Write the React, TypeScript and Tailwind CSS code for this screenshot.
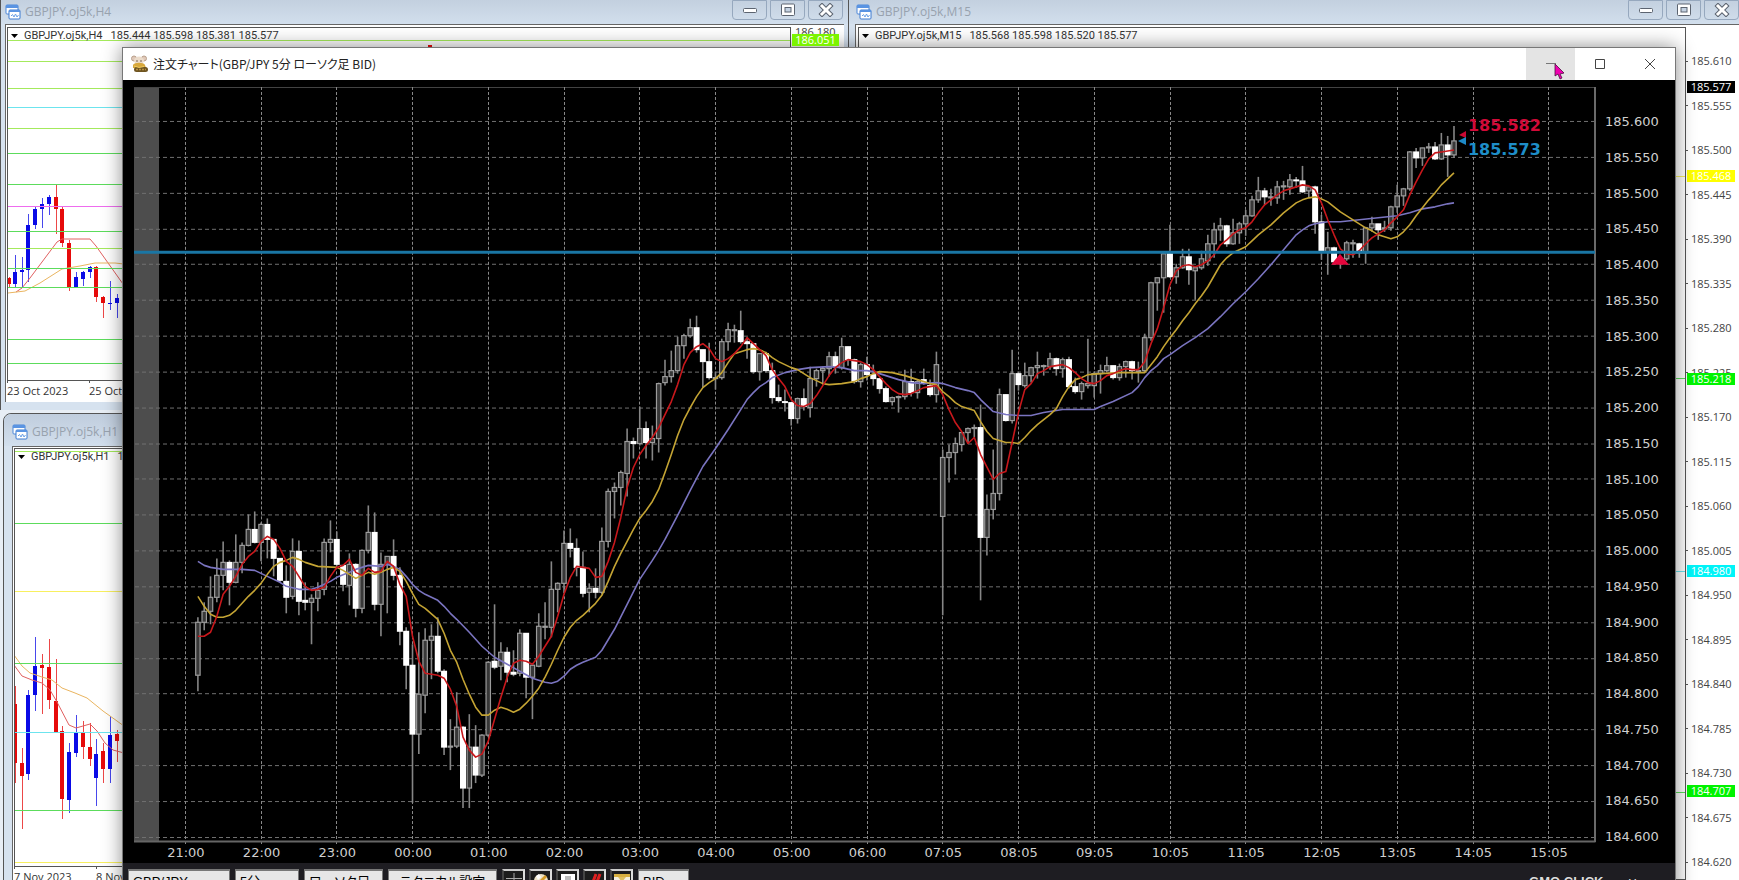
import React from "react";

type Candle = [high: number, top: number, bottom: number, low: number, up: 0 | 1];
type Point = [number, number];

// 5 minute candles, oldest first
const CANDLES: Candle[] = [
  [618, 623, 676, 691, 1], [603, 612, 623, 630, 1], [577, 598, 612, 624, 1], [559, 576, 598, 602, 1],
  [542, 563, 576, 590, 1], [561, 563, 583, 605, 0], [535, 563, 583, 583, 1], [543, 546, 563, 573, 1],
  [515, 530, 546, 546, 1], [512, 530, 543, 543, 0], [523, 525, 543, 561, 1], [519, 525, 540, 558, 0],
  [540, 540, 559, 576, 0], [559, 559, 581, 582, 0], [566, 582, 598, 613, 0], [539, 552, 597, 599, 1],
  [541, 552, 602, 615, 0], [583, 601, 603, 610, 0], [595, 599, 603, 644, 1], [583, 591, 599, 611, 1],
  [539, 543, 590, 595, 1], [521, 540, 543, 552, 1], [532, 540, 565, 566, 0], [566, 566, 585, 591, 0],
  [554, 565, 586, 605, 1], [564, 565, 609, 617, 0], [550, 551, 609, 613, 1], [506, 533, 551, 553, 1],
  [513, 533, 605, 610, 0], [553, 565, 605, 636, 1], [557, 557, 565, 613, 1], [540, 557, 576, 580, 0],
  [568, 576, 632, 645, 0], [628, 632, 666, 689, 0], [645, 666, 735, 803, 0], [633, 695, 735, 754, 1],
  [629, 641, 696, 713, 1], [625, 637, 641, 679, 1], [618, 637, 672, 673, 0], [670, 672, 748, 755, 0],
  [720, 747, 748, 770, 1], [693, 728, 747, 748, 1], [727, 728, 789, 808, 0], [715, 748, 789, 808, 1],
  [726, 748, 776, 783, 0], [735, 736, 776, 777, 1], [662, 663, 736, 737, 1], [605, 662, 668, 669, 0],
  [643, 653, 667, 680, 1], [648, 653, 673, 682, 0], [651, 673, 675, 676, 0], [630, 634, 674, 676, 1],
  [634, 634, 678, 698, 0], [664, 666, 678, 719, 1], [614, 627, 667, 667, 1], [603, 627, 628, 639, 1],
  [562, 590, 628, 637, 1], [583, 584, 590, 612, 1], [531, 544, 584, 593, 1], [529, 544, 549, 557, 0],
  [539, 549, 568, 576, 0], [552, 568, 594, 597, 0], [584, 589, 593, 612, 1], [569, 589, 593, 598, 0],
  [528, 542, 593, 594, 1], [489, 492, 542, 547, 1], [483, 488, 492, 518, 1], [471, 473, 488, 505, 1],
  [429, 442, 474, 496, 1], [438, 442, 444, 458, 0], [407, 429, 444, 445, 1], [422, 429, 443, 458, 0],
  [426, 439, 443, 460, 1], [383, 384, 439, 452, 1], [360, 377, 383, 385, 1], [351, 371, 377, 382, 1],
  [337, 346, 371, 373, 1], [334, 336, 346, 358, 1], [319, 328, 336, 337, 1], [316, 328, 350, 352, 0],
  [350, 350, 362, 387, 0], [343, 362, 378, 379, 0], [372, 378, 379, 389, 1], [339, 342, 378, 379, 1],
  [323, 330, 342, 350, 1], [325, 330, 331, 342, 1], [311, 331, 342, 343, 0], [338, 342, 344, 358, 0],
  [344, 344, 372, 373, 0], [354, 354, 372, 380, 1], [352, 354, 371, 372, 0], [363, 371, 398, 403, 0],
  [385, 398, 401, 402, 0], [390, 402, 403, 411, 0], [403, 403, 419, 425, 0], [398, 399, 419, 423, 1],
  [389, 399, 407, 410, 0], [367, 379, 408, 417, 1], [369, 371, 379, 386, 1], [367, 369, 371, 384, 1],
  [352, 357, 369, 376, 1], [352, 357, 367, 373, 0], [338, 347, 368, 369, 1], [347, 347, 360, 365, 0],
  [359, 360, 382, 383, 0], [363, 365, 382, 387, 1], [357, 365, 375, 380, 0], [365, 375, 379, 385, 0],
  [379, 379, 389, 393, 0], [387, 389, 402, 402, 0], [397, 398, 402, 405, 1], [396, 397, 397, 412, 1],
  [370, 382, 397, 399, 1], [369, 382, 393, 396, 0], [380, 382, 393, 398, 1], [369, 380, 383, 384, 0],
  [380, 386, 395, 396, 0], [352, 365, 395, 402, 1], [450, 458, 517, 615, 1], [445, 453, 458, 482, 1],
  [438, 444, 453, 474, 1], [433, 433, 445, 451, 1], [428, 429, 433, 443, 1], [425, 428, 429, 437, 1],
  [405, 428, 538, 600, 0], [495, 510, 538, 555, 1], [450, 494, 510, 519, 1], [389, 395, 494, 500, 1],
  [395, 395, 421, 421, 0], [350, 374, 421, 423, 1], [373, 374, 385, 390, 0], [363, 376, 386, 387, 1],
  [367, 368, 376, 382, 1], [352, 366, 368, 378, 1], [365, 366, 367, 375, 1], [353, 359, 367, 369, 1],
  [358, 359, 369, 375, 0], [358, 360, 369, 377, 1], [357, 360, 387, 388, 0], [378, 387, 392, 393, 0],
  [382, 384, 392, 399, 1], [339, 384, 386, 388, 1], [372, 374, 386, 397, 1], [365, 371, 374, 393, 1],
  [357, 366, 371, 372, 1], [366, 366, 378, 379, 0], [364, 367, 378, 380, 1], [361, 362, 367, 377, 1],
  [361, 362, 371, 379, 0], [362, 371, 372, 382, 1], [334, 338, 371, 372, 1], [282, 283, 338, 340, 1],
  [278, 278, 283, 310, 1], [254, 254, 278, 312, 1], [225, 254, 277, 277, 0], [264, 268, 277, 283, 1],
  [249, 257, 268, 268, 1], [249, 257, 270, 284, 0], [267, 268, 271, 299, 1], [251, 259, 268, 269, 1],
  [235, 244, 261, 265, 1], [223, 230, 244, 257, 1], [218, 226, 230, 240, 1], [225, 226, 244, 246, 0],
  [219, 233, 244, 244, 1], [222, 224, 233, 243, 1], [210, 216, 224, 235, 1], [196, 200, 216, 216, 1],
  [177, 191, 200, 202, 1], [188, 191, 197, 204, 0], [189, 197, 198, 205, 1], [181, 187, 198, 203, 1],
  [181, 186, 187, 199, 1], [174, 180, 187, 194, 1], [177, 180, 181, 187, 0], [166, 181, 192, 192, 0],
  [186, 187, 191, 197, 1], [186, 187, 222, 233, 0], [215, 222, 252, 259, 0], [232, 248, 252, 274, 1],
  [247, 248, 262, 264, 0], [257, 259, 262, 268, 1], [241, 243, 259, 260, 1], [240, 243, 244, 257, 1],
  [243, 244, 253, 257, 0], [227, 228, 253, 263, 1], [217, 224, 228, 231, 1], [224, 224, 230, 239, 0],
  [221, 228, 229, 231, 1], [206, 207, 228, 230, 1], [185, 196, 207, 212, 1], [188, 189, 196, 205, 1],
  [151, 152, 189, 190, 1], [148, 152, 158, 167, 0], [148, 148, 158, 165, 1], [143, 147, 148, 152, 1],
  [142, 147, 159, 159, 0], [133, 145, 159, 159, 1], [136, 145, 155, 176, 0], [126, 141, 155, 157, 1],
];

// moving averages as [candle index, y]
const MA_SHORT: Point[] = [
  [0, 637], [1, 637], [2, 633], [3, 617], [4, 595], [5, 587], [6, 577], [7, 565], [8, 557], [9, 552],
  [10, 542], [11, 537], [12, 540], [13, 549], [14, 562], [15, 567], [16, 577], [17, 587], [18, 591],
  [19, 590], [20, 588], [21, 577], [22, 568], [23, 566], [24, 560], [25, 573], [26, 576], [27, 569],
  [28, 573], [29, 572], [30, 562], [31, 567], [32, 585], [33, 597], [34, 637], [35, 662], [36, 674],
  [38, 676], [39, 679], [40, 690], [41, 707], [42, 738], [43, 751], [44, 758], [45, 755], [46, 742],
  [47, 720], [48, 698], [49, 678], [50, 664], [51, 661], [52, 662], [53, 665], [54, 657], [55, 647],
  [56, 637], [57, 617], [58, 595], [59, 578], [60, 567], [61, 568], [62, 569], [63, 578], [64, 577],
  [65, 562], [66, 543], [67, 518], [68, 488], [69, 468], [70, 455], [71, 446], [72, 438], [73, 428],
  [74, 415], [75, 402], [76, 385], [77, 365], [78, 353], [79, 347], [80, 344], [81, 349], [82, 359],
  [83, 362], [84, 359], [85, 354], [86, 347], [87, 338], [88, 344], [89, 350], [90, 356], [91, 370],
  [92, 379], [93, 387], [94, 400], [95, 406], [96, 407], [97, 404], [98, 396], [99, 386], [100, 376],
  [101, 368], [102, 363], [103, 360], [104, 361], [105, 362], [106, 365], [107, 370], [108, 377],
  [109, 384], [110, 390], [111, 394], [112, 395], [113, 394], [114, 391], [115, 388], [116, 387],
  [117, 386], [118, 395], [119, 410], [120, 423], [121, 432], [122, 444], [123, 438], [124, 455],
  [126, 480], [127, 474], [128, 472], [129, 443], [130, 413], [131, 390], [132, 384], [133, 374],
  [134, 371], [135, 367], [136, 366], [137, 365], [138, 368], [139, 373], [140, 379], [141, 383],
  [142, 384], [143, 381], [144, 376], [145, 374], [146, 371], [147, 369], [148, 370], [149, 370],
  [150, 362], [151, 344], [152, 329], [153, 308], [154, 285], [155, 271], [156, 266], [157, 265],
  [158, 267], [159, 265], [160, 261], [161, 255], [162, 245], [163, 240], [164, 234], [165, 230],
  [166, 228], [167, 222], [168, 213], [169, 205], [170, 200], [171, 195], [172, 191], [173, 189],
  [174, 187], [175, 185], [176, 186], [177, 190], [178, 203], [179, 220], [180, 235], [181, 249],
  [182, 254], [183, 255], [184, 251], [185, 244], [186, 238], [187, 234], [188, 230], [189, 223],
  [190, 217], [191, 210], [192, 195], [193, 182], [194, 170], [195, 159], [196, 153], [197, 152],
  [198, 151], [199, 150],
];

const MA_MIDDLE: Point[] = [
  [0, 597], [1, 607], [2, 615], [3, 618], [4, 618], [5, 616], [6, 611], [7, 604], [8, 597], [9, 591],
  [10, 584], [11, 575], [12, 567], [13, 563], [14, 561], [15, 558], [16, 560], [17, 563], [19, 567],
  [22, 568], [23, 571], [24, 575], [25, 579], [26, 576], [27, 573], [28, 575], [29, 573], [30, 570],
  [31, 568], [32, 572], [33, 582], [34, 594], [35, 605], [36, 609], [38, 620], [39, 634], [40, 651],
  [41, 663], [42, 680], [43, 695], [44, 708], [45, 716], [46, 716], [47, 711], [48, 708], [49, 710],
  [50, 713], [51, 710], [52, 704], [53, 697], [54, 689], [55, 678], [56, 665], [57, 651], [58, 638],
  [59, 628], [60, 621], [61, 616], [62, 610], [63, 604], [64, 596], [65, 582], [66, 567], [67, 554],
  [68, 542], [69, 530], [70, 519], [71, 511], [72, 502], [73, 490], [74, 473], [75, 455], [76, 436],
  [77, 420], [78, 408], [79, 397], [80, 388], [81, 383], [82, 379], [83, 373], [84, 363], [85, 354],
  [86, 352], [87, 350], [88, 349], [89, 350], [90, 353], [91, 358], [92, 362], [94, 368], [95, 370],
  [96, 374], [97, 378], [98, 381], [99, 384], [100, 385], [102, 384], [104, 382], [105, 379],
  [106, 377], [107, 374], [108, 372], [110, 373], [112, 376], [114, 380], [116, 384], [117, 385],
  [118, 392], [119, 397], [120, 403], [121, 407], [122, 409], [123, 411], [124, 422], [125, 432],
  [126, 439], [127, 441], [128, 443], [129, 443], [130, 444], [131, 438], [132, 431], [133, 425],
  [134, 420], [135, 415], [136, 409], [137, 397], [138, 387], [139, 380], [140, 378], [141, 375],
  [143, 374], [146, 373], [148, 373], [150, 373], [151, 365], [152, 357], [153, 347], [154, 338],
  [155, 330], [156, 321], [157, 313], [158, 304], [159, 296], [160, 287], [161, 276], [162, 265],
  [163, 258], [164, 253], [165, 250], [166, 247], [167, 241], [168, 235], [169, 230], [170, 225],
  [171, 219], [172, 213], [173, 208], [174, 203], [175, 200], [176, 198], [177, 197], [178, 199],
  [179, 202], [180, 207], [181, 212], [182, 216], [183, 220], [184, 224], [185, 228], [186, 231],
  [187, 235], [188, 237], [189, 239], [190, 237], [191, 232], [192, 225], [193, 216], [194, 208],
  [195, 200], [196, 193], [197, 185], [198, 179], [199, 173],
];

const MA_LONG: Point[] = [
  [0, 562], [1, 566], [2, 568], [4, 570], [7, 570], [9, 571], [11, 577], [13, 583], [14, 587],
  [16, 590], [18, 590], [19, 588], [21, 582], [22, 578], [24, 573], [25, 570], [27, 566], [29, 567],
  [30, 565], [31, 567], [32, 570], [33, 577], [34, 585], [35, 591], [36, 595], [38, 601], [39, 607],
  [40, 614], [41, 620], [43, 633], [45, 647], [47, 658], [49, 665], [51, 672], [53, 679], [54, 681],
  [55, 683], [56, 684], [57, 682], [58, 677], [59, 670], [60, 666], [61, 663], [63, 658], [64, 651],
  [66, 630], [68, 605], [70, 580], [72, 561], [73, 551], [74, 540], [76, 516], [78, 491], [80, 467],
  [82, 449], [84, 430], [86, 410], [87, 400], [88, 393], [89, 387], [90, 383], [91, 378], [93, 373],
  [95, 370], [97, 368], [100, 367], [102, 368], [104, 371], [106, 371], [107, 372], [109, 376],
  [111, 380], [113, 383], [115, 384], [117, 383], [118, 384], [120, 388], [122, 391], [123, 393],
  [124, 400], [126, 412], [128, 415], [130, 416], [132, 416], [134, 413], [136, 411], [137, 410],
  [142, 410], [143, 407], [145, 402], [148, 393], [149, 387], [150, 378], [151, 371], [152, 366],
  [153, 359], [154, 355], [156, 346], [158, 338], [160, 329], [162, 317], [164, 304], [166, 292],
  [168, 279], [170, 265], [172, 250], [174, 235], [175, 230], [176, 226], [177, 224], [179, 222],
  [181, 222], [184, 220], [187, 218], [190, 216], [192, 213], [194, 209], [196, 207], [198, 204],
  [199, 203],
];

const PRICES = Array.from({ length: 21 }, (_, i) => (185.6 - i * 0.05).toFixed(3));
const TIMES = [
  "21:00", "22:00", "23:00", "00:00", "01:00", "02:00", "03:00", "04:00", "05:00", "06:00",
  "07:05", "08:05", "09:05", "10:05", "11:05", "12:05", "13:05", "14:05", "15:05",
];
const M15_PRICES = Array.from({ length: 19 }, (_, i) => (185.61 - i * 0.055).toFixed(3));

const LIME = "#a4ea5c";
const GREEN = "#5cdc5c";
const YELLOW = "#f8f060";
const CYAN = "#6ce4ee";
const MAGENTA = "#ee6cee";

const candleX = (i: number) => 197.9 + i * 6.312;
const toPoints = (line: Point[]) => line.map(([i, y]) => `${candleX(i)},${y}`).join(" ");

function OrderPlot() {
  return (
    <svg
      className="block h-full w-full"
      viewBox="134 87 1464 759"
      preserveAspectRatio="none"
      role="img"
      aria-label="GBP/JPY 5分"
    >
      <rect x="134" y="87" width="25" height="756" fill="#4d4d4d" />
      <path d="M134 87.5H1595" stroke="#444" />
      <g stroke="#707070" strokeWidth="1">
        {PRICES.map((p, i) => (
          <path key={p} d={`M135 ${Math.round(121 + i * 35.84) + 0.5}H1598`} strokeDasharray="4 3" />
        ))}
        {TIMES.map((t, i) => (
          <path
            key={t}
            d={`M${Math.round(185 + i * 75.74) + 0.5} 87V845`}
            stroke="#8a8a8a"
            strokeDasharray="3 2"
          />
        ))}
      </g>
      <path d="M134 842.5H1595.5" stroke="#666" strokeWidth="2" fill="none" />
      <path d="M1595 87V843" stroke="#6a6a6a" strokeWidth="2" />
      {CANDLES.map(([high, top, bottom, low, up], i) => {
        const x = candleX(i);
        return (
          <g key={i}>
            <path d={`M${x} ${high}V${low + 1}`} stroke="#868686" strokeWidth="1.6" />
            {up ? (
              <rect
                x={x - 2.2}
                y={top}
                width="4.4"
                height={Math.max(bottom - top, 1)}
                fill="#383838"
                stroke="#9c9c9c"
                strokeWidth="1.2"
              />
            ) : (
              <rect x={x - 3} y={top - 0.5} width="6" height={Math.max(bottom - top + 1, 2)} fill="#fff" />
            )}
          </g>
        );
      })}
      <g fill="none" strokeWidth="1.6" strokeLinejoin="round">
        <polyline points={toPoints(MA_LONG)} stroke="#7a74c0" />
        <polyline points={toPoints(MA_MIDDLE)} stroke="#c4a434" />
        <polyline points={toPoints(MA_SHORT)} stroke="#c8181c" />
      </g>
      <path d="M134 252.5H1595" stroke="#1a76a4" strokeWidth="3" />
      <path d="M1340 254L1349 265H1331Z" fill="#e4063c" />
      <path d="M1459 135L1466 131V138Z" fill="#c80a34" />
      <path d="M1458 141L1466 137V145Z" fill="#1e8ac8" />
      <g fontFamily="DejaVu Sans, sans-serif" fontSize="16" fontWeight="700">
        <text x="1468" y="131" fill="#d20a38">185.582</text>
        <text x="1468" y="155" fill="#1e8ec8">185.573</text>
      </g>
    </svg>
  );
}

// x position, high, top, bottom, low, rising
type MiniCandle = [number, number, number, number, number, 0 | 1];

const H4_CANDLES: MiniCandle[] = [
  [9, 277, 278, 284, 288, 0], [15, 255, 272, 284, 288, 1], [22, 257, 270, 272, 288, 1],
  [28, 214, 225, 270, 282, 1], [35, 206, 209, 225, 229, 1], [42, 198, 204, 209, 228, 1],
  [49, 195, 197, 204, 215, 1], [56, 185, 197, 209, 234, 0], [62, 207, 209, 243, 247, 0],
  [69, 240, 243, 287, 291, 0], [76, 272, 277, 287, 287, 1], [83, 271, 272, 279, 286, 1],
  [90, 266, 267, 272, 278, 1], [96, 266, 267, 297, 302, 0], [103, 296, 297, 303, 318, 0],
  [110, 281, 303, 304, 310, 1], [117, 294, 298, 303, 318, 1], [124, 300, 302, 310, 319, 0],
];
const H1_CANDLES: MiniCandle[] = [
  [15, 686, 704, 763, 783, 0], [22, 748, 763, 776, 829, 0], [28, 690, 695, 774, 780, 1],
  [35, 637, 666, 695, 711, 1], [42, 654, 665, 668, 714, 0], [49, 639, 667, 700, 709, 0],
  [56, 659, 701, 732, 732, 0], [62, 726, 731, 799, 819, 0], [69, 743, 752, 800, 813, 1],
  [76, 715, 732, 753, 757, 1], [83, 721, 733, 747, 759, 0], [90, 723, 747, 759, 766, 0],
  [96, 739, 754, 778, 806, 1], [103, 743, 751, 769, 783, 0], [110, 716, 735, 769, 783, 1],
  [117, 730, 734, 741, 762, 0],
];

interface MiniPlotProps {
  origin: Point;
  levels: [number, string][];
  candles?: MiniCandle[];
  fast?: string;
  slow?: string;
}

const MiniPlot: React.FC<MiniPlotProps> = ({ origin, levels, candles = [], fast, slow }) => (
  <svg className="absolute inset-0 h-full w-full" aria-hidden="true">
    <g transform={`translate(${-origin[0]} ${-origin[1]})`}>
      {candles.map(([x, high, top, bottom, low, up]) => (
        <g key={x} fill={up ? "#0a0ae6" : "#e60a0a"}>
          <rect x={x} y={high} width="1" height={low - high} opacity="0.75" />
          <rect x={x - 2} y={top} width="4" height={Math.max(bottom - top, 1)} />
        </g>
      ))}
      <polyline points={fast} fill="none" stroke="#e06060" />
      <polyline points={slow} fill="none" stroke="#eab560" />
      {levels.map(([y, color]) => (
        <rect key={y} x={origin[0]} y={y} width="100%" height="1" fill={color} />
      ))}
    </g>
  </svg>
);

const ChartIcon = () => (
  <svg width="16" height="16" viewBox="0 0 16 16" aria-hidden="true">
    <rect x="1" y="1" width="12" height="9" rx="1" fill="#fff" stroke="#4a86d8" />
    <path d="M1 1h12v3H1z" fill="#5a94e2" />
    <rect x="4" y="6" width="11" height="9" rx="1" fill="#fff" stroke="#3c7ad0" />
    <path d="M4 6h11v2H4z" fill="#5a94e2" />
    <path d="M6 12l1.500-1.500L9 13l1.500-3L12 13l1.500-2" fill="none" stroke="#6aa0e6" />
  </svg>
);

const frameButton = "flex h-5 w-[35px] items-center justify-center rounded-b-sm border border-[#96a8be]";

const FrameButtons = () => (
  <div className="flex h-5 gap-[3px] self-start">
    <button aria-label="Minimize" className={frameButton}>
      <svg width="16" height="14" viewBox="0 0 16 14">
        <rect x="1.500" y="5.500" width="13" height="4" rx="1" fill="#fff" stroke="#5c6470" />
      </svg>
    </button>
    <button aria-label="Maximize" className={frameButton}>
      <svg width="16" height="14" viewBox="0 0 16 14">
        <rect x="1.500" y="1" width="13" height="11.500" rx="1" fill="#fff" stroke="#5c6470" />
        <rect x="5" y="4.500" width="6" height="4.500" fill="#c4d2e2" stroke="#5c6470" />
      </svg>
    </button>
    <button aria-label="Close" className={frameButton}>
      <svg width="16" height="14" viewBox="0 0 16 14">
        <path d="M4 3l8 8M12 3L4 11" stroke="#5c6470" strokeWidth="5" strokeLinecap="square" />
        <path d="M4 3l8 8M12 3L4 11" stroke="#fff" strokeWidth="3" strokeLinecap="square" />
      </svg>
    </button>
  </div>
);

interface FrameTitleProps {
  title: string;
  className: string;
  buttons?: boolean;
}

const FrameTitle: React.FC<FrameTitleProps> = ({ title, className, buttons }) => (
  <div className={`flex shrink-0 items-center gap-1 text-xs text-[#98a2ae] ${className}`}>
    <ChartIcon />
    <h2 className="flex-1 whitespace-nowrap">{title}</h2>
    {buttons && <FrameButtons />}
  </div>
);

const SymbolLine = ({ symbol, values }: { symbol: string; values: string }) => (
  <p className="relative flex items-center whitespace-nowrap text-[#333] font-['Roboto',sans-serif]">
    <svg width="7" height="4" viewBox="0 0 7 4" className="mr-[6px]" aria-hidden="true">
      <path d="M0 0h7L3.500 4z" fill="#000" />
    </svg>
    <span className="mr-2">{symbol}</span>
    <span>{values}</span>
  </p>
);

const DateAxis = ({ dates }: { dates: string[] }) => (
  <div className="flex">
    {dates.map((date) => (
      <div key={date} className="w-[82px] whitespace-nowrap">
        <div className="h-[2px] w-px bg-[#555]" />
        {date}
      </div>
    ))}
  </div>
);

const H4Window = () => (
  <section className="absolute left-0 top-0 flex h-[410px] w-[848px] flex-col border-l border-[#555] bg-[#d6e2ef] px-1 pb-2">
    <FrameTitle title="GBPJPY.oj5k,H4" className="-mx-1 h-6 bg-linear-to-b from-[#c3d0df] to-[#d2dfed] pb-px pl-1 pr-[5px]" buttons />
    <div className="flex min-h-0 flex-1 border-l border-t border-[#666] bg-white pl-px pt-[2px]">
      <div className="flex flex-1 flex-col">
        <div className="relative h-[354px] border border-[#555] pl-[3px]">
          <MiniPlot
            origin={[8, 28]}
            levels={[
              [40, LIME], [61, LIME], [88, LIME], [107, CYAN], [128, LIME], [153, GREEN], [184, GREEN],
              [206, MAGENTA], [231, GREEN], [248, LIME], [268, GREEN], [287, GREEN], [339, GREEN], [363, GREEN],
            ]}
            candles={[...H4_CANDLES, [430, 45, 45, 47, 60, 0]]}
            fast="16,292 22,288 30,278 57,242 62,239 90,239 96,246 123,284"
            slow="8,293 25,291 40,283 62,269 80,266 95,263 115,263 124,264"
          />
          <SymbolLine symbol="GBPJPY.oj5k,H4" values="185.444 185.598 185.381 185.577" />
        </div>
        <DateAxis dates={["23 Oct 2023", "25 Oct 2023"]} />
      </div>
      <div className="flex w-[53px] flex-col items-start text-[#444]">
        <span className="h-[7px] pl-1 leading-[10px]">186.180</span>
        <span className="relative z-1 ml-px w-[47px] bg-[#7cf400] text-center leading-3 text-white">186.051</span>
      </div>
    </div>
  </section>
);

const H1Window = () => (
  <section className="absolute -bottom-8 left-[3px] top-[413px] flex w-[845px] flex-col rounded-t-lg border border-[#555] bg-[#d6e2ef] pl-2">
    <FrameTitle title="GBPJPY.oj5k,H1" className="-ml-2 h-8 rounded-t-lg bg-linear-to-b from-[#c0cddd] to-[#d2dfed] pl-2 pt-1" />
    <div className="flex min-h-0 flex-1 border-l border-t border-[#666] bg-white pl-px pt-px">
      <div className="flex flex-1 flex-col">
        <div className="relative h-[419px] border border-[#555] pl-[3px]">
          <MiniPlot
            origin={[15, 449]}
            levels={[[451, LIME], [523, GREEN], [591, YELLOW], [663, GREEN], [732, CYAN], [810, GREEN], [862, YELLOW]]}
            candles={H1_CANDLES}
            fast="14,665 22,676 32,680 42,683 50,690 57,702 69,725 76,728 90,724 97,731 105,743 113,750 124,753"
            slow="14,655 22,666 30,673 42,677 52,680 62,688 75,693 87,698 103,711 124,726"
          />
          <SymbolLine symbol="GBPJPY.oj5k,H1" values="185.568 185.598 185.520 185.577" />
        </div>
        <DateAxis dates={["7 Nov 2023", "8 Nov 2023"]} />
      </div>
    </div>
  </section>
);

const M15Window = () => (
  <section className="absolute bottom-0 left-[848px] right-0 top-0 flex flex-col border-l border-[#555] bg-[#d6e2ef] pl-[6px]">
    <FrameTitle title="GBPJPY.oj5k,M15" className="-ml-[6px] h-6 bg-linear-to-b from-[#c3d0df] to-[#d2dfed] pb-px pl-[7px]" buttons />
    <div className="flex min-h-0 flex-1 border-l border-t border-[#666] bg-white pl-[2px] pt-[2px]">
      <div className="relative flex-1 border border-[#555] pl-[3px]">
        <MiniPlot origin={[0, 28]} levels={[[176, YELLOW], [378, GREEN], [571, CYAN], [792, GREEN]]} />
        <SymbolLine symbol="GBPJPY.oj5k,M15" values="185.568 185.598 185.520 185.577" />
      </div>
      <div className="relative w-[53px] text-[#444]">
        <ol className="flex h-full flex-col justify-between pb-[10px] pt-[26px]">
          {M15_PRICES.map((price) => (
            <li key={price} className="flex items-center gap-[3px]">
              <span className="h-px w-[2px] bg-[#555]" />
              {price}
            </li>
          ))}
        </ol>
        <span className="absolute left-px top-[54px] w-12 bg-black text-center leading-3 text-white">185.577</span>
        <span className="absolute left-px top-[143px] w-12 bg-[#ffff00] text-center leading-3 text-white">185.468</span>
        <span className="absolute left-px top-[346px] w-12 bg-[#00f400] text-center leading-3 text-white">185.218</span>
        <span className="absolute left-px top-[538px] w-12 bg-[#00f4f8] text-center leading-3 text-white">184.980</span>
        <span className="absolute left-px top-[758px] w-12 bg-[#00f400] text-center leading-3 text-white">184.707</span>
      </div>
    </div>
  </section>
);

const MascotIcon = () => (
  <svg width="17" height="18" viewBox="0 0 17 18" aria-hidden="true">
    <circle cx="3" cy="3.500" r="2.500" fill="#e0c8b8" stroke="#b8a08c" />
    <circle cx="13" cy="3.500" r="2.500" fill="#e0c8b8" stroke="#b8a08c" />
    <ellipse cx="8" cy="5.500" rx="5" ry="4" fill="#ecdccb" />
    <path d="M2 10c1-3 11-3 12 0l1 3H2z" fill="#d8a83c" />
    <circle cx="6" cy="6" r="0.800" fill="#6a5440" />
    <circle cx="10" cy="6" r="0.800" fill="#6a5440" />
    <rect x="3" y="12" width="14" height="5" rx="2.500" fill="#6e5420" />
    <path d="M5 14.500h10" stroke="#b89040" strokeWidth="1.500" strokeDasharray="2 1" />
    <path d="M3 11l5 1.500 5-1" stroke="#f0cc60" fill="none" />
  </svg>
);

const toolButton = "flex h-7 w-[23px] items-start justify-center border-2 border-b-[#555] border-l-[#444] border-r-[#ddd] border-t-[#ccc] bg-[#1c1c1c] pt-[2px]";
const selectBox = "h-[25px] appearance-none border border-t-2 border-[#777] bg-[#e6e6e6] px-1 leading-4 text-black";

const OrderToolbar = () => (
  <div className="flex h-14 shrink-0 items-start gap-[5px] bg-[#1e1d22] pl-[5px] pt-[6px] text-[13px] font-['Liberation_Sans','Noto_Sans_CJK_JP',sans-serif]">
    <select aria-label="通貨ペア" className={`${selectBox} w-[102px]`}>
      <option>GBP/JPY</option>
    </select>
    <select aria-label="足種" className={`${selectBox} w-16`}>
      <option>5分</option>
    </select>
    <select aria-label="チャート種類" className={`${selectBox} w-[79px] [font-feature-settings:'palt']`}>
      <option>ローソク足</option>
    </select>
    <button className="h-[25px] w-[109px] border border-t-2 border-[#777] bg-[#e6e6e6] leading-4 text-black [font-feature-settings:'palt']">
      テクニカル設定
    </button>
    <div className="flex gap-1">
      <button aria-label="十字線" className={toolButton}>
        <svg width="16" height="16" viewBox="0 0 16 16">
          <path d="M8 0v16M0 5.500h16" stroke="#aaa" />
        </svg>
      </button>
      <button aria-label="色" className={toolButton}>
        <svg width="16" height="16" viewBox="0 0 16 16">
          <circle cx="8" cy="8" r="7" fill="#eee4c8" />
          <path d="M6 8l6-6 2 2-6 6z" fill="#d49a28" />
          <path d="M3 3l3-2 2 3-3 3z" fill="#fff" />
        </svg>
      </button>
      <button aria-label="保存" className={toolButton}>
        <svg width="16" height="16" viewBox="0 0 16 16">
          <rect x="1" y="1" width="14" height="14" fill="#fff" />
          <path d="M5 3h6v4H5z" fill="#bbb" />
        </svg>
      </button>
      <button aria-label="ライン" className={toolButton}>
        <svg width="16" height="16" viewBox="0 0 16 16">
          <path d="M9 1L4 14M13 1L8 14" stroke="#e02020" strokeWidth="3" />
        </svg>
      </button>
      <button aria-label="注文" className={toolButton}>
        <svg width="16" height="16" viewBox="0 0 16 16">
          <rect x="0" y="1" width="16" height="14" fill="#f4f0e0" />
          <path d="M0 1h16v3H0z" fill="#d8b040" />
          <path d="M4 4l4 5 4-5z" fill="#e0c060" />
        </svg>
      </button>
    </div>
    <select aria-label="BID/ASK" className={`${selectBox} w-[51px]`}>
      <option>BID</option>
    </select>
    <p className="ml-auto flex items-baseline pr-2 pt-[3px] font-bold text-[#ddd]">
      <span className="text-[13px] leading-5">GMO CLICK</span>
      <span className="text-[9px] leading-5">Securities, Inc.</span>
    </p>
  </div>
);

const OrderWindow = () => (
  <section className="absolute -bottom-10 left-[122px] right-[63px] top-[47px] flex flex-col border border-[#777] bg-black shadow-[0_0_18px_rgba(0,0,0,0.45)]">
    <header className="flex h-8 shrink-0 items-center bg-white pl-2">
      <MascotIcon />
      <h1 className="ml-[5px] flex-1 text-xs text-[#222] font-['Noto_Sans_CJK_JP',sans-serif] [font-feature-settings:'palt']">
        注文チャート(GBP/JPY 5分 ローソク足 BID)
      </h1>
      <div className="flex h-full">
        <button aria-label="最小化" className="relative flex w-[49px] items-center justify-center bg-[#e4e4e4]">
          <svg width="12" height="12" viewBox="0 0 12 12">
            <path d="M1 5.500h10" stroke="#777" />
          </svg>
          <svg width="12" height="16" viewBox="0 0 12 16" className="absolute left-7 top-4" aria-hidden="true">
            <path d="M1 0v12l3-2 2 5 2-1-2-4 4-1z" fill="#f000b0" stroke="#4a1040" strokeWidth="0.800" />
          </svg>
        </button>
        <button aria-label="最大化" className="flex w-[50px] items-center justify-center">
          <svg width="12" height="12" viewBox="0 0 12 12">
            <path d="M1.500 1.500h9v9h-9z" fill="none" stroke="#444" />
          </svg>
        </button>
        <button aria-label="閉じる" className="flex w-[50px] items-center justify-center">
          <svg width="12" height="12" viewBox="0 0 12 12">
            <path d="M1 1l10 10M11 1L1 11" stroke="#444" />
          </svg>
        </button>
      </div>
    </header>
    <div className="flex min-h-0 flex-1 pl-[11px] pt-[7px] text-[13px] leading-4 text-[#cfcfcf] font-['DejaVu_Sans',sans-serif]">
      <div className="min-w-0 flex-1">
        <OrderPlot />
      </div>
      <ol className="flex w-[77px] flex-col justify-between pl-[7px] pt-[27px]">
        {PRICES.map((price) => (
          <li key={price}>{price}</li>
        ))}
      </ol>
    </div>
    <ol className="flex h-[18px] shrink-0 pl-[25px] pr-[88px] text-center text-[13px] leading-4 text-[#cfcfcf] font-['DejaVu_Sans',sans-serif]">
      {TIMES.map((time) => (
        <li key={time} className="flex-1">
          {time}
        </li>
      ))}
    </ol>
    <OrderToolbar />
  </section>
);

export default function App() {
  return (
    <main className="relative h-screen overflow-hidden bg-[#e8eef5] text-[11px] leading-4 text-[#333] font-['Open_Sans',sans-serif]">
      <H4Window />
      <M15Window />
      <H1Window />
      <OrderWindow />
    </main>
  );
}
